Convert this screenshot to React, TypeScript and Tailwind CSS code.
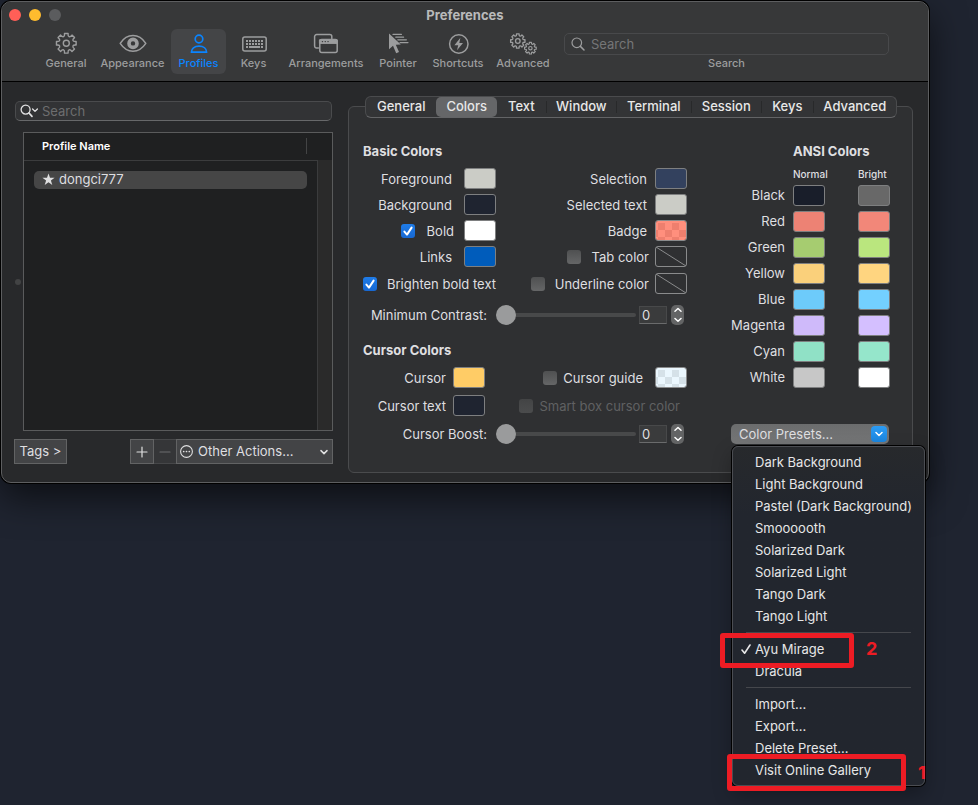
import React, { Fragment, ReactNode, useId } from "react";

const noop = () => {};

/* ---------- icons ---------- */

function gearPath(cx: number, cy: number, outer: number, ctrl: number, teeth: number) {
  const step = (Math.PI * 2) / teeth;
  const half = step * 0.23;
  const pt = (a: number, r: number) =>
    `${(cx + Math.sin(a) * r).toFixed(2)} ${(cy - Math.cos(a) * r).toFixed(2)}`;
  let d = `M${pt(-half, outer)}`;
  for (let i = 0; i < teeth; i++) {
    const a = i * step;
    d += ` L${pt(a + half, outer)}`;
    d += ` C${pt(a + half * 1.2, ctrl)} ${pt(a + step - half * 1.2, ctrl)} ${pt(a + step - half, outer)}`;
  }
  return d + "Z";
}

function Svg({ w, h = 24, children }: { w: number; h?: number; children: ReactNode }) {
  return (
    <svg
      width={w}
      height={h}
      viewBox={`0 0 ${w} ${h}`}
      fill="none"
      stroke="currentColor"
      strokeWidth="1.5"
      strokeLinecap="round"
      strokeLinejoin="round"
      aria-hidden="true"
    >
      {children}
    </svg>
  );
}

const GearIcon = () => (
  <Svg w={24}>
    <path d={gearPath(12.3, 12.3, 10, 6.4, 8)} strokeWidth="1.4" />
    <circle cx="12.3" cy="12.3" r="3" strokeWidth="1.4" />
  </Svg>
);

const EyeIcon = () => (
  <Svg w={28}>
    <path d="M1.2 12.4C4.5 7.4 9 4.6 14 4.6S23.5 7.4 26.8 12.4C23.5 17.4 19 20.2 14 20.2S4.5 17.4 1.2 12.4Z" />
    <circle cx="14" cy="12.4" r="4" strokeWidth="3.6" />
  </Svg>
);

const PersonIcon = () => (
  <Svg w={24}>
    <circle cx="12" cy="8" r="3.8" strokeWidth="1.7" />
    <path d="M4.4 21.2C4.4 17.6 7.4 15.2 12 15.2S19.6 17.6 19.6 21.2Z" strokeWidth="1.7" />
  </Svg>
);

const KeyboardIcon = () => (
  <Svg w={26}>
    <rect x="1.8" y="6" width="23.4" height="14" rx="2" />
    <g stroke="none" fill="currentColor">
      {[5, 8, 11, 14, 17, 20].map((x) => (
        <rect key={x} x={x} y="9" width="2" height="2" />
      ))}
      {[5, 8, 11, 14, 17, 20].map((x) => (
        <rect key={x} x={x} y="12" width="2" height="2" />
      ))}
      <rect x="5" y="15" width="2" height="2" />
      <rect x="8" y="15" width="11" height="2" />
      <rect x="20" y="15" width="2" height="2" />
    </g>
  </Svg>
);

const WindowsIcon = () => (
  <Svg w={26}>
    <path d="M5.4 17H3.6A2 2 0 0 1 1.6 15V5.6A2 2 0 0 1 3.6 3.6H16.8A2 2 0 0 1 18.8 5.6V7.4" />
    <rect x="6.8" y="8.6" width="17.4" height="13" rx="2" />
    <path d="M6.8 8.8H24.2V12.4H6.8Z" fill="currentColor" strokeWidth="1" />
    <path d="M9.4 10.6h.1M12.2 10.6h.1M15 10.6h.1" stroke="#373839" strokeWidth="1.4" />
  </Svg>
);

const PointerIcon = () => (
  <Svg w={24}>
    <path d="M3 2.6V18.2L7 14.8L10.2 22.2L13 21L9.800 13.800L14.800 13.400Z" fill="currentColor" stroke="none" />
    <path d="M7 3.400H15.400M9.800 6.200H17.600M11.800 8.800H20.400M14 11.600H22" strokeWidth="1.200" />
  </Svg>
);

const BoltIcon = () => (
  <Svg w={24}>
    <circle cx="12.8" cy="13" r="9.2" />
    <path d="M14.4 6.8L8.400 14.200H12.200L11 19.200L17 11.900H13.300Z" fill="currentColor" stroke="none" />
  </Svg>
);

const GearsIcon = () => (
  <Svg w={30}>
    <path d={gearPath(9.8, 10, 7.3, 4.8, 8)} strokeWidth="1.3" />
    <circle cx="9.8" cy="10" r="2.300" strokeWidth="1.3" />
    <path d={gearPath(22.4, 17.2, 5.9, 3.8, 8)} strokeWidth="1.2" />
    <circle cx="22.4" cy="17.2" r="1.7" strokeWidth="1.2" />
  </Svg>
);

/* ---------- controls ---------- */

function Swatch({ id, label, tone }: { id?: string; label?: string; tone: string }) {
  return (
    <button
      id={id}
      aria-label={label}
      className={`block h-[21px] w-8 shrink-0 rounded-[3px] border border-[#7e7f80] ${tone}`}
    />
  );
}

function EmptySwatch({ label }: { label: string }) {
  return (
    <button aria-label={label} className="block h-[21px] w-8 shrink-0 rounded-[3px] border border-[#8a8b8c] text-[#8a8b8c]">
      <svg className="block h-full w-full" viewBox="0 0 30 19" preserveAspectRatio="none" aria-hidden="true">
        <path d="M0 0L30 19" stroke="currentColor" strokeWidth="1" />
      </svg>
    </button>
  );
}

function CheckerSwatch({ label, base, square }: { label: string; base: string; square: string }) {
  return (
    <button aria-label={label} className="block h-[21px] w-8 shrink-0 overflow-hidden rounded-[3px] border border-[#8a8b8c]">
      <svg className="block h-full w-full" viewBox="0 0 30 19" aria-hidden="true">
        <rect width="30" height="19" fill={base} />
        {[0, 1, 2].map((row) =>
          [0, 1, 2, 3, 4].map((col) =>
            (row + col) % 2 === 1 ? (
              <rect key={`${row}-${col}`} x={col * 7 - 5} y={row * 7 + 2} width="7" height="7" fill={square} />
            ) : null
          )
        )}
      </svg>
    </button>
  );
}

function Check({ label, checked = false, disabled = false, gap }: { label: string; checked?: boolean; disabled?: boolean; gap: string }) {
  return (
    <label className={`flex items-center whitespace-nowrap ${gap} ${disabled ? "text-[#606162]" : ""}`}>
      <span className="grid size-[14px] shrink-0">
        <input
          type="checkbox"
          checked={checked}
          disabled={disabled}
          onChange={noop}
          className="col-start-1 row-start-1 size-[14px] appearance-none rounded-[3px] bg-linear-to-b from-[#4f5051] to-[#656667] checked:from-[#1f7ce8] checked:to-[#1768d2] disabled:from-[#434445] disabled:to-[#4b4c4d]"
        />
        {checked && (
          <svg className="pointer-events-none col-start-1 row-start-1" viewBox="0 0 14 14" fill="none" aria-hidden="true">
            <path d="M3.4 7.6L6 10.6L10.6 3.6" stroke="#fff" strokeWidth="2" strokeLinecap="round" strokeLinejoin="round" />
          </svg>
        )}
      </span>
      {label}
    </label>
  );
}

function SliderRow({ label }: { label: string }) {
  const id = useId();
  return (
    <div className="flex h-5 items-center">
      <label htmlFor={id} className="mr-[9px] w-[124px] text-right whitespace-nowrap">
        {label}
      </label>
      <input
        id={id}
        type="range"
        min="0"
        max="100"
        value="0"
        onChange={noop}
        className="h-5 w-[140px] appearance-none bg-transparent [&::-webkit-slider-runnable-track]:h-1 [&::-webkit-slider-runnable-track]:rounded-full [&::-webkit-slider-runnable-track]:bg-[#48494a] [&::-webkit-slider-thumb]:-mt-2 [&::-webkit-slider-thumb]:size-5 [&::-webkit-slider-thumb]:appearance-none [&::-webkit-slider-thumb]:rounded-full [&::-webkit-slider-thumb]:bg-[#9a9b9c]"
      />
      <input
        type="text"
        aria-label={`${label} value`}
        value="0"
        onChange={noop}
        className="ml-[3px] h-[18px] w-7 border border-[#48494a] border-b-[#6a6b6c] bg-[#3a3b3c] px-[2px]"
      />
      <div className="ml-1 flex h-5 w-[13px] flex-col overflow-hidden rounded-[5px] bg-[#636465] text-white">
        <button aria-label={`Increase ${label}`} className="flex flex-1 items-center justify-center">
          <Svg w={8} h={6}>
            <path d="M1 4.2L4 1.5L7 4.2" />
          </Svg>
        </button>
        <button aria-label={`Decrease ${label}`} className="flex flex-1 items-center justify-center">
          <Svg w={8} h={6}>
            <path d="M1 1.5L4 4.2L7 1.5" />
          </Svg>
        </button>
      </div>
    </div>
  );
}

function Field({ label, tone, gap }: { label: string; tone: string; gap: string }) {
  const id = useId();
  return (
    <div className={`flex items-center ${gap}`}>
      <label htmlFor={id}>{label}</label>
      <Swatch id={id} tone={tone} />
    </div>
  );
}

function Row({ left, right, leftWidth }: { left: ReactNode; right?: ReactNode; leftWidth: string }) {
  return (
    <div className="flex h-[21px] items-center">
      <div className={`flex shrink-0 justify-end ${leftWidth}`}>{left}</div>
      <div className="flex flex-1 items-center justify-end">{right}</div>
    </div>
  );
}

/* ---------- toolbar ---------- */

const toolbar = [
  { name: "General", icon: <GearIcon />, width: "w-14" },
  { name: "Appearance", icon: <EyeIcon />, width: "w-[77px]" },
  { name: "Profiles", icon: <PersonIcon />, width: "w-[55px]" },
  { name: "Keys", icon: <KeyboardIcon />, width: "w-[55px]" },
  { name: "Arrangements", icon: <WindowsIcon />, width: "w-[90px]" },
  { name: "Pointer", icon: <PointerIcon />, width: "w-[54px]" },
  { name: "Shortcuts", icon: <BoltIcon />, width: "w-[66px]" },
  { name: "Advanced", icon: <GearsIcon />, width: "w-16" },
];

function TitleBar() {
  return (
    <header className="rounded-t-[9px] border-b border-black bg-[#373839] pb-[7px]">
      <div className="grid h-[27px] grid-cols-[1fr_auto_1fr] items-center pb-[2px]">
        <div className="flex gap-2 pl-[7px]">
          <button aria-label="Close" className="size-3 rounded-full bg-[#ff5f57]" />
          <button aria-label="Minimize" className="size-3 rounded-full bg-[#febc2e]" />
          <button aria-label="Zoom" className="size-3 rounded-full bg-[#5b5c5e]" />
        </div>
        <h1 className="font-bold text-[#b9babb]">Preferences</h1>
      </div>
      <div className="flex pr-[39px] pl-9">
        <nav className="flex">
          {toolbar.map((t) => (
            <button
              key={t.name}
              className={`flex h-[45px] flex-col items-center rounded-md pt-[2px] text-[11px] leading-4 font-medium ${t.width} ${
                t.name === "Profiles" ? "bg-[#444547] text-[#0a84ff]" : "text-[#9c9d9e]"
              }`}
            >
              {t.icon}
              {t.name}
            </button>
          ))}
        </nav>
        <div className="ml-[9px] flex flex-1 flex-col items-center pt-1 text-[11px] leading-4 font-medium text-[#9c9d9e]">
          <div className="flex h-[22px] w-full items-center rounded-[5px] border border-[#48494b] pl-[6px]">
            <Svg w={14} h={14}>
              <circle cx="5.8" cy="5.8" r="4.8" strokeWidth="1.2" />
              <path d="M9.4 9.4L13 13" strokeWidth="1.5" />
            </Svg>
            <input
              id="toolbar-search"
              type="text"
              placeholder="Search"
              className="ml-[6px] min-w-0 flex-1 bg-transparent text-[13px] font-normal outline-none placeholder:text-[#757677]"
            />
          </div>
          <label htmlFor="toolbar-search">Search</label>
        </div>
      </div>
    </header>
  );
}

/* ---------- profile list ---------- */

function ProfileList() {
  return (
    <section className="flex w-[319px] shrink-0 flex-col pt-[19px]">
      <div className="mx-px flex h-5 items-center rounded-[5px] border border-[#4a4b4d] border-b-[#67686a] bg-[#323335] pl-1 text-[#e2e2e3]">
        <Svg w={19} h={14}>
          <circle cx="5.6" cy="5.6" r="4.5" strokeWidth="1.3" />
          <path d="M9 9L12 12.4" strokeWidth="1.7" />
          <path d="M12.6 5L15 7.4L17.400 5" strokeWidth="1.3" />
        </Svg>
        <input
          type="text"
          aria-label="Search profiles"
          placeholder="Search"
          className="ml-[3px] min-w-0 flex-1 bg-transparent outline-none placeholder:text-[#6d6e6f]"
        />
      </div>
      <div className="mt-[11px] flex items-center gap-[2px] pl-px">
        <span className="size-[6px] shrink-0 rounded-full bg-[#424344]" />
        <div className="flex-1 border border-[#5a5b5c] bg-[#1f2021]">
          <table className="h-[297px] w-full border-collapse">
            <thead>
              <tr className="h-[27px]">
                <th className="border-b border-[#3b3c3d] p-0 text-left text-[11px] font-semibold text-white">
                  <div className="mr-[10px] ml-[18px] flex h-4 items-center border-r border-[#434445]">Profile Name</div>
                </th>
                <th className="w-[15px] p-0" aria-hidden="true" />
              </tr>
            </thead>
            <tbody>
              <tr>
                <td className="px-[10px] pt-[10px] pb-0 align-top">
                  <div className="flex h-[18px] items-center gap-1 rounded-[5px] bg-[#464646] pb-px pl-2">
                    <svg width="13" height="13" viewBox="0 0 13 13" fill="currentColor" aria-hidden="true">
                      <path d="M6.5 .5L8 4.8H12.6L8.9 7.5L10.3 12L6.5 9.3L2.7 12L4.1 7.5L.4 4.8H5Z" />
                    </svg>
                    dongci777
                  </div>
                </td>
                <td className="border-l border-[#3b3c3d] bg-[#2a2a2a]" />
              </tr>
            </tbody>
          </table>
        </div>
      </div>
      <div className="mt-2 flex h-[25px]">
        <button className="w-[53px] border border-[#626364] bg-[#434446] pb-px">Tags &gt;</button>
        <div className="ml-auto flex">
          <button aria-label="Add profile" className="flex w-6 items-center justify-center border border-[#626364] bg-[#434446]">
            <Svg w={12} h={12}>
              <path d="M6 1V11M1 6H11" strokeWidth="1.2" />
            </Svg>
          </button>
          <button
            aria-label="Remove profile"
            disabled
            className="flex w-[22px] items-center justify-center border-y border-[#464749] bg-[#353638] text-[#6c6d6e]"
          >
            <Svg w={12} h={12}>
              <path d="M1 6H11" strokeWidth="1.2" />
            </Svg>
          </button>
          <div className="grid w-[157px] items-center border border-[#626364] bg-[#434446]">
            <select aria-label="Other actions" className="col-start-1 row-start-1 h-full w-full appearance-none bg-transparent pb-px pl-[21px]">
              <option>Other Actions...</option>
            </select>
            <div className="pointer-events-none col-start-1 row-start-1 flex justify-between pr-1 pl-[3px]">
              <Svg w={14} h={14}>
                <circle cx="6.500" cy="6.500" r="5.900" strokeWidth="1.1" />
                <path d="M3.700 6.500h.01M6.500 6.500h.01M9.300 6.500h.01" strokeWidth="1.7" />
              </Svg>
              <Svg w={8} h={14}>
                <path d="M1 5.6L4 8.6L7 5.6" />
              </Svg>
            </div>
          </div>
        </div>
      </div>
    </section>
  );
}

/* ---------- colors panel ---------- */

const tabs = [
  { name: "General", width: "grow-[71]" },
  { name: "Colors", width: "grow-[61]" },
  { name: "Text", width: "grow-[49]" },
  { name: "Window", width: "grow-[70]" },
  { name: "Terminal", width: "grow-[74]" },
  { name: "Session", width: "grow-[70]" },
  { name: "Keys", width: "grow-[51]" },
  { name: "Advanced", width: "grow-[83]" },
];

const ansi = [
  { name: "Black", normal: "bg-[#191e2a]", bright: "bg-[#686868]" },
  { name: "Red", normal: "bg-[#ed8274]", bright: "bg-[#f28779]" },
  { name: "Green", normal: "bg-[#a6cc70]", bright: "bg-[#bae67e]" },
  { name: "Yellow", normal: "bg-[#fad07b]", bright: "bg-[#ffd580]" },
  { name: "Blue", normal: "bg-[#6dcbfa]", bright: "bg-[#73d0ff]" },
  { name: "Magenta", normal: "bg-[#cfbafa]", bright: "bg-[#d4bfff]" },
  { name: "Cyan", normal: "bg-[#90e1c6]", bright: "bg-[#95e6cb]" },
  { name: "White", normal: "bg-[#c7c7c7]", bright: "bg-white" },
];

function MenuItem({ label, checked = false, children }: { label: string; checked?: boolean; children?: ReactNode }) {
  return (
    <li className="relative">
      <button className="flex h-[22px] w-full items-center pl-2 text-left whitespace-nowrap">
        <span className="w-[14px]">
          {checked && (
            <Svg w={12} h={12}>
              <path d="M1 7L3.6 10.2L9 2" strokeWidth="1.6" />
            </Svg>
          )}
        </span>
        {label}
      </button>
      {children}
    </li>
  );
}

const MenuRule = () => <li className="mx-[13px] my-[5px] h-px bg-[#45474c]" aria-hidden="true" />;

function PresetMenu() {
  return (
    <ul className="absolute top-[22px] left-px z-10 w-[193px] rounded-md border border-[#4b4d52] bg-linear-to-b from-[#27292c] to-[#22262e] to-20% pt-1 pb-1 text-[#e6e6e7] shadow-[0_0_0_1px_#000,0_8px_20px_rgba(0,0,0,0.3)]">
      <MenuItem label="Dark Background" />
      <MenuItem label="Light Background" />
      <MenuItem label="Pastel (Dark Background)" />
      <MenuItem label="Smoooooth" />
      <MenuItem label="Solarized Dark" />
      <MenuItem label="Solarized Light" />
      <MenuItem label="Tango Dark" />
      <MenuItem label="Tango Light" />
      <MenuRule />
      <MenuItem label="Ayu Mirage" checked>
        <span className="absolute -top-[5px] -left-[13px] z-10 h-[35px] w-[134px] rounded-[3px] border-[5px] border-[#ed1c24]" />
        <span className="absolute top-0 left-[133px] text-lg leading-[22px] font-bold text-[#ed1c24]">2</span>
      </MenuItem>
      <MenuItem label="Dracula" />
      <MenuRule />
      <MenuItem label="Import..." />
      <MenuItem label="Export..." />
      <MenuItem label="Delete Preset..." />
      <MenuItem label="Visit Online Gallery">
        <span className="absolute -top-[5px] -left-[6px] z-10 h-[37px] w-[179px] rounded-[3px] border-[5px] border-[#ed1c24]" />
        <span className="absolute top-[3px] left-[185px] w-2 overflow-hidden text-lg leading-[22px] font-bold text-[#ed1c24]">1</span>
      </MenuItem>
    </ul>
  );
}

function ColorsPanel() {
  return (
    <section className="mt-6 flex-1 rounded-md border border-[#4a4b4d] bg-[#2f3032] pb-7">
      <nav className="-mt-[11px] mr-[15px] ml-4 flex h-[22px] rounded-md border border-[#4a4b4d] border-b-[#636466] bg-[#333436] font-medium">
        {tabs.map((t, i) => (
          <Fragment key={t.name}>
            {i > 2 && <span className="my-1 w-px bg-[#28292a]" />}
            <button
              className={`basis-0 rounded-[5px] pb-[2px] text-center text-[#e8e8e8] ${t.width} ${t.name === "Colors" ? "bg-[#656668]" : ""}`}
            >
              {t.name}
            </button>
          </Fragment>
        ))}
      </nav>
      <div className="flex justify-between pt-[25px] pr-[22px] pl-[14px]">
        <div className="w-[324px]">
          <h2 className="h-4 leading-4 font-bold">Basic Colors</h2>
          <div className="mt-[9px] flex flex-col gap-[5px]">
            <Row
              leftWidth="w-[133px]"
              left={<Field label="Foreground" tone="bg-[#cbccc6]" gap="gap-3" />}
              right={<Field label="Selection" tone="bg-[#33415e]" gap="gap-2" />}
            />
            <Row
              leftWidth="w-[133px]"
              left={<Field label="Background" tone="bg-[#1f2430]" gap="gap-3" />}
              right={<Field label="Selected text" tone="bg-[#cbccc6]" gap="gap-2" />}
            />
            <Row
              leftWidth="w-[133px]"
              left={
                <div className="flex items-center gap-[10px]">
                  <Check label="Bold" checked gap="gap-3" />
                  <Swatch label="Bold color" tone="bg-white" />
                </div>
              }
              right={
                <div className="flex items-center gap-2">
                  <span>Badge</span>
                  <CheckerSwatch label="Badge color" base="#ff8f7d" square="#ee7f6e" />
                </div>
              }
            />
            <Row
              leftWidth="w-[133px]"
              left={<Field label="Links" tone="bg-[#005cbb]" gap="gap-3" />}
              right={
                <div className="flex items-center gap-[6px]">
                  <Check label="Tab color" gap="gap-[11px]" />
                  <EmptySwatch label="Tab color value" />
                </div>
              }
            />
          </div>
          <div className="mt-[6px]">
            <Row
              leftWidth="w-[133px]"
              left={<Check label="Brighten bold text" checked gap="gap-[10px]" />}
              right={
                <div className="flex items-center gap-[6px]">
                  <Check label="Underline color" gap="gap-[10px]" />
                  <EmptySwatch label="Underline color value" />
                </div>
              }
            />
          </div>
          <div className="mt-[11px]">
            <SliderRow label="Minimum Contrast:" />
          </div>
          <h2 className="mt-[17px] h-4 leading-4 font-bold">Cursor Colors</h2>
          <div className="mt-[9px] flex flex-col gap-[7px]">
            <Row
              leftWidth="w-[122px]"
              left={<Field label="Cursor" tone="bg-[#ffcc66]" gap="gap-[7px]" />}
              right={
                <div className="flex items-center gap-3">
                  <Check label="Cursor guide" gap="gap-[6px]" />
                  <CheckerSwatch label="Cursor guide color" base="#ebf7fe" square="#d5e1e8" />
                </div>
              }
            />
            <Row
              leftWidth="w-[122px]"
              left={<Field label="Cursor text" tone="bg-[#1f2430]" gap="gap-[7px]" />}
              right={
                <div className="pr-[7px]">
                  <Check label="Smart box cursor color" disabled gap="gap-[6px]" />
                </div>
              }
            />
          </div>
          <div className="mt-2">
            <SliderRow label="Cursor Boost:" />
          </div>
        </div>
        <div className="w-[159px]">
          <h2 className="ml-[62px] h-4 leading-4 font-bold">ANSI Colors</h2>
          <table className="mt-[7px] w-full table-fixed border-collapse">
            <thead>
              <tr className="h-4 text-left text-[10px] leading-4">
                <td className="w-[62px] p-0" />
                <th className="w-[65px] p-0 font-medium">Normal</th>
                <th className="p-0 font-medium">Bright</th>
              </tr>
            </thead>
            <tbody>
              {ansi.map((c) => (
                <tr key={c.name} className="h-[26px]">
                  <th className="p-0 pr-2 text-right font-normal">{c.name}</th>
                  <td className="p-0">
                    <Swatch label={`${c.name} normal`} tone={c.normal} />
                  </td>
                  <td className="p-0">
                    <Swatch label={`${c.name} bright`} tone={c.bright} />
                  </td>
                </tr>
              ))}
            </tbody>
          </table>
          <div className="relative mt-[34px] mr-px grid h-5 items-center rounded-[5px] bg-linear-to-b from-[#6b6c6d] to-[#767778]">
            <select aria-label="Color presets" className="col-start-1 row-start-1 h-5 w-full appearance-none bg-transparent pb-px pl-2">
              <option>Color Presets...</option>
            </select>
            <span className="pointer-events-none col-start-1 row-start-1 mr-[2px] flex size-4 items-center justify-center justify-self-end rounded-[4px] bg-linear-to-b from-[#2b9bf3] to-[#1a86e0] text-white">
              <Svg w={8} h={6}>
                <path d="M1 1.5L4 4.5L7 1.5" />
              </Svg>
            </span>
            <PresetMenu />
          </div>
        </div>
      </div>
    </section>
  );
}

export default function App() {
  return (
    <div className="min-h-screen bg-[#1f2430] pt-px pr-[49px] pl-px font-['Inter','Liberation_Sans',sans-serif] text-[13px] leading-4 text-[#dfdfe0]">
      <main className="rounded-[10px] border border-[#5d5e60] bg-[#28292b] shadow-[0_0_0_1px_#000,0_14px_36px_rgba(0,0,0,0.6)]">
        <TitleBar />
        <div className="flex gap-[15px] pr-[15px] pb-[9px] pl-3">
          <ProfileList />
          <ColorsPanel />
        </div>
      </main>
    </div>
  );
}
